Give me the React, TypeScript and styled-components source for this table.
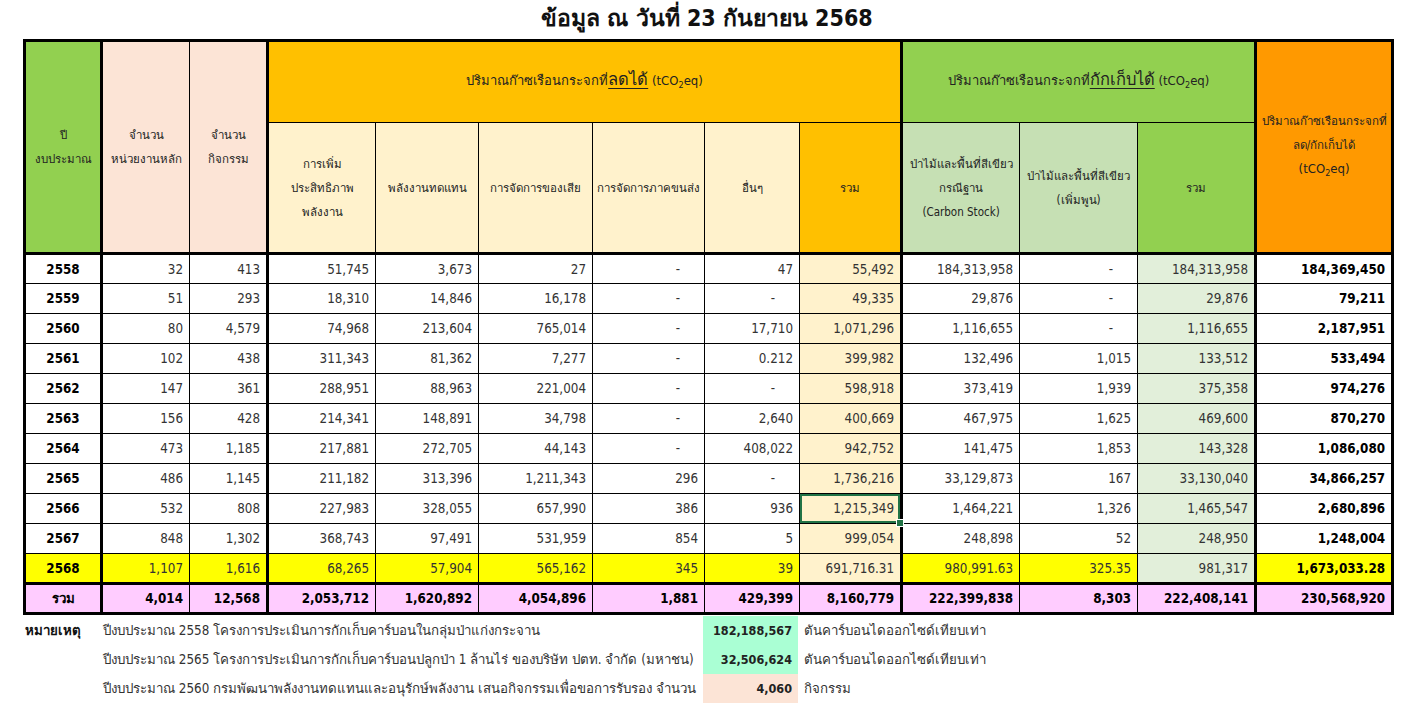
import React from 'react';
import styled, { createGlobalStyle, css } from 'styled-components';

const GlobalStyle = createGlobalStyle`
  body {
    margin: 0;
    background: #ffffff;
    font-family: Tahoma, 'DejaVu Sans Condensed', 'DejaVu Sans', 'Noto Sans', sans-serif;
    color: #222;
  }
`;

// spreadsheet palette
const C = {
  green: '#92d050',
  greenSoft: '#c6e0b4',
  greenPale: '#e2efda',
  peach: '#fce4d6',
  amber: '#ffc000',
  cream: '#fff2cc',
  orange: '#ff9900',
  yellow: '#ffff00',
  pink: '#ffccff',
  mint: '#aaffd4',
  select: '#217346',
};

const Page = styled.div`
  width: 1408px;
  padding-left: 23px;
  box-sizing: border-box;
`;

const Title = styled.h1`
  margin: 0;
  height: 39px;
  line-height: 36px;
  width: 1368px;
  text-align: center;
  font-size: 23px;
  font-weight: 700;
  color: #111;
`;

const Sheet = styled.table`
  border-collapse: collapse;
  table-layout: fixed;
  width: 1368px;
  border: 3px solid #000;
`;

const HeadRow = styled.tr<{ $h: number }>`
  height: ${p => p.$h}px;
`;

const Row = styled.tr`
  height: 30px;
`;

const thick = css`
  border-right: 3px solid #000;
`;

const HeadCell = styled.th<{ $bg: string; $thick?: boolean; $base?: boolean }>`
  background: ${p => p.$bg};
  border: 1px solid #000;
  ${p => p.$thick && thick}
  ${p => p.$base && 'border-bottom: 3px solid #000;'}
  font-weight: 400;
  font-size: 11.5px;
  line-height: 24px;
  color: #222;
  text-align: center;
  vertical-align: middle;
  white-space: nowrap;
  padding: 0 2px;
`;

const GroupTitle = styled.span`
  font-size: 13px;
  u {
    font-size: 16.5px;
    text-underline-offset: 3px;
  }
  sub {
    font-size: 9px;
    vertical-align: -3px;
  }
`;

const Cell = styled.td<{
  $bg?: string;
  $thick?: boolean;
  $bold?: boolean;
  $center?: boolean;
  $dash?: boolean;
  $top?: boolean;
  $selected?: boolean;
}>`
  position: relative;
  background: ${p => p.$bg || '#fff'};
  border: 1px solid #000;
  ${p => p.$thick && thick}
  ${p => p.$top && 'border-top: 3px solid #000;'}
  font-size: 13.3px;
  font-weight: ${p => (p.$bold ? 700 : 400)};
  color: ${p => (p.$bold ? '#000' : '#333')};
  text-align: ${p => (p.$center ? 'center' : 'right')};
  padding: 0 ${p => (p.$dash ? 24 : 6)}px 0 0;
  ${p => p.$center && 'padding: 0;'}
  white-space: nowrap;
  ${p =>
    p.$selected &&
    css`
      box-shadow: inset 0 0 0 2px ${C.select};
      &::after {
        content: '';
        position: absolute;
        right: -4px;
        bottom: -4px;
        width: 6px;
        height: 6px;
        background: ${C.select};
        border: 1px solid #fff;
        z-index: 2;
      }
    `}
`;

const Notes = styled.div`
  display: grid;
  grid-template-columns: 80px 600px 95px auto;
  grid-auto-rows: 29px;
  width: 1368px;
  font-size: 13.3px;
  color: #333;
  margin-top: 1px;
`;

const NoteLabel = styled.div`
  font-weight: 700;
  color: #111;
  padding-left: 2px;
  display: flex;
  align-items: center;
`;

const NoteText = styled.div`
  display: flex;
  align-items: center;
  white-space: nowrap;
`;

const NoteValue = styled.div<{ $bg: string }>`
  background: ${p => p.$bg};
  display: flex;
  align-items: center;
  justify-content: flex-end;
  padding-right: 6px;
  font-weight: 700;
  font-size: 12.5px;
  color: #222;
`;

const NoteUnit = styled.div`
  display: flex;
  align-items: center;
  padding-left: 6px;
  white-space: nowrap;
`;

const widths = [77, 88, 78, 108, 103, 114, 112, 95, 102, 118, 118, 118, 137];
const thickAfter = [0, 2, 8, 11, 12];

const rows: string[][] = [
  ['2558', '32', '413', '51,745', '3,673', '27', '-', '47', '55,492', '184,313,958', '-', '184,313,958', '184,369,450'],
  ['2559', '51', '293', '18,310', '14,846', '16,178', '-', '-', '49,335', '29,876', '-', '29,876', '79,211'],
  ['2560', '80', '4,579', '74,968', '213,604', '765,014', '-', '17,710', '1,071,296', '1,116,655', '-', '1,116,655', '2,187,951'],
  ['2561', '102', '438', '311,343', '81,362', '7,277', '-', '0.212', '399,982', '132,496', '1,015', '133,512', '533,494'],
  ['2562', '147', '361', '288,951', '88,963', '221,004', '-', '-', '598,918', '373,419', '1,939', '375,358', '974,276'],
  ['2563', '156', '428', '214,341', '148,891', '34,798', '-', '2,640', '400,669', '467,975', '1,625', '469,600', '870,270'],
  ['2564', '473', '1,185', '217,881', '272,705', '44,143', '-', '408,022', '942,752', '141,475', '1,853', '143,328', '1,086,080'],
  ['2565', '486', '1,145', '211,182', '313,396', '1,211,343', '296', '-', '1,736,216', '33,129,873', '167', '33,130,040', '34,866,257'],
  ['2566', '532', '808', '227,983', '328,055', '657,990', '386', '936', '1,215,349', '1,464,221', '1,326', '1,465,547', '2,680,896'],
  ['2567', '848', '1,302', '368,743', '97,491', '531,959', '854', '5', '999,054', '248,898', '52', '248,950', '1,248,004'],
  ['2568', '1,107', '1,616', '68,265', '57,904', '565,162', '345', '39', '691,716.31', '980,991.63', '325.35', '981,317', '1,673,033.28'],
];

const totals = ['รวม', '4,014', '12,568', '2,053,712', '1,620,892', '4,054,896', '1,881', '429,399', '8,160,779', '222,399,838', '8,303', '222,408,141', '230,568,920'];

const cellBg = (col: number, highlight: boolean) => {
  if (col === 8) return C.cream;
  if (col === 11) return C.greenPale;
  return highlight ? C.yellow : undefined;
};

const Co2 = () => (
  <>
    (tCO<sub>2</sub>eq)
  </>
);

export default function App() {
  return (
    <Page>
      <GlobalStyle />
      <Title>ข้อมูล ณ วันที่ 23 กันยายน 2568</Title>
      <Sheet>
        <colgroup>
          {widths.map((w, i) => (
            <col key={i} style={{ width: w }} />
          ))}
        </colgroup>
        <thead>
          <HeadRow $h={82}>
            <HeadCell $bg={C.green} $thick $base rowSpan={2}>
              ปี
              <br />
              งบประมาณ
            </HeadCell>
            <HeadCell $bg={C.peach} $base rowSpan={2}>
              จำนวน
              <br />
              หน่วยงานหลัก
            </HeadCell>
            <HeadCell $bg={C.peach} $thick $base rowSpan={2}>
              จำนวน
              <br />
              กิจกรรม
            </HeadCell>
            <HeadCell $bg={C.amber} $thick colSpan={6}>
              <GroupTitle>
                ปริมาณก๊าซเรือนกระจกที่<u>ลดได้</u> <Co2 />
              </GroupTitle>
            </HeadCell>
            <HeadCell $bg={C.green} $thick colSpan={3}>
              <GroupTitle>
                ปริมาณก๊าซเรือนกระจกที่<u>กักเก็บได้</u> <Co2 />
              </GroupTitle>
            </HeadCell>
            <HeadCell $bg={C.orange} $base rowSpan={2}>
              ปริมาณก๊าซเรือนกระจกที่
              <br />
              ลด/กักเก็บได้
              <br />
              <GroupTitle>
                <Co2 />
              </GroupTitle>
            </HeadCell>
          </HeadRow>
          <HeadRow $h={131}>
            <HeadCell $bg={C.cream} $base>
              การเพิ่ม
              <br />
              ประสิทธิภาพ
              <br />
              พลังงาน
            </HeadCell>
            <HeadCell $bg={C.cream} $base>
              พลังงานทดแทน
            </HeadCell>
            <HeadCell $bg={C.cream} $base>
              การจัดการของเสีย
            </HeadCell>
            <HeadCell $bg={C.cream} $base>
              การจัดการภาคขนส่ง
            </HeadCell>
            <HeadCell $bg={C.cream} $base>
              อื่นๆ
            </HeadCell>
            <HeadCell $bg={C.amber} $thick $base>
              รวม
            </HeadCell>
            <HeadCell $bg={C.greenSoft} $base>
              ป่าไม้และพื้นที่สีเขียว
              <br />
              กรณีฐาน
              <br />
              (Carbon Stock)
            </HeadCell>
            <HeadCell $bg={C.greenSoft} $base>
              ป่าไม้และพื้นที่สีเขียว
              <br />
              (เพิ่มพูน)
            </HeadCell>
            <HeadCell $bg={C.green} $thick $base>
              รวม
            </HeadCell>
          </HeadRow>
        </thead>
        <tbody>
          {rows.map((r, ri) => {
            const hl = r[0] === '2568';
            return (
              <Row key={r[0]}>
                {r.map((v, ci) => (
                  <Cell
                    key={ci}
                    $bg={cellBg(ci, hl)}
                    $thick={thickAfter.includes(ci)}
                    $bold={ci === 0 || ci === 12}
                    $center={ci === 0}
                    $dash={v === '-'}
                    $selected={ri === 8 && ci === 8}
                  >
                    {v}
                  </Cell>
                ))}
              </Row>
            );
          })}
          <Row>
            {totals.map((v, ci) => (
              <Cell key={ci} $bg={C.pink} $thick={thickAfter.includes(ci)} $bold $center={ci === 0} $top>
                {v}
              </Cell>
            ))}
          </Row>
        </tbody>
      </Sheet>
      <Notes>
        <NoteLabel>หมายเหตุ</NoteLabel>
        <NoteText>ปีงบประมาณ 2558 โครงการประเมินการกักเก็บคาร์บอนในกลุ่มป่าแก่งกระจาน</NoteText>
        <NoteValue $bg={C.mint}>182,188,567</NoteValue>
        <NoteUnit>ตันคาร์บอนไดออกไซด์เทียบเท่า</NoteUnit>

        <span />
        <NoteText>ปีงบประมาณ 2565 โครงการประเมินการกักเก็บคาร์บอนปลูกป่า 1 ล้านไร่ ของบริษัท ปตท. จำกัด (มหาชน)</NoteText>
        <NoteValue $bg={C.mint}>32,506,624</NoteValue>
        <NoteUnit>ตันคาร์บอนไดออกไซด์เทียบเท่า</NoteUnit>

        <span />
        <NoteText>ปีงบประมาณ 2560 กรมพัฒนาพลังงานทดแทนและอนุรักษ์พลังงาน เสนอกิจกรรมเพื่อขอการรับรอง จำนวน</NoteText>
        <NoteValue $bg={C.peach}>4,060</NoteValue>
        <NoteUnit>กิจกรรม</NoteUnit>
      </Notes>
    </Page>
  );
}
